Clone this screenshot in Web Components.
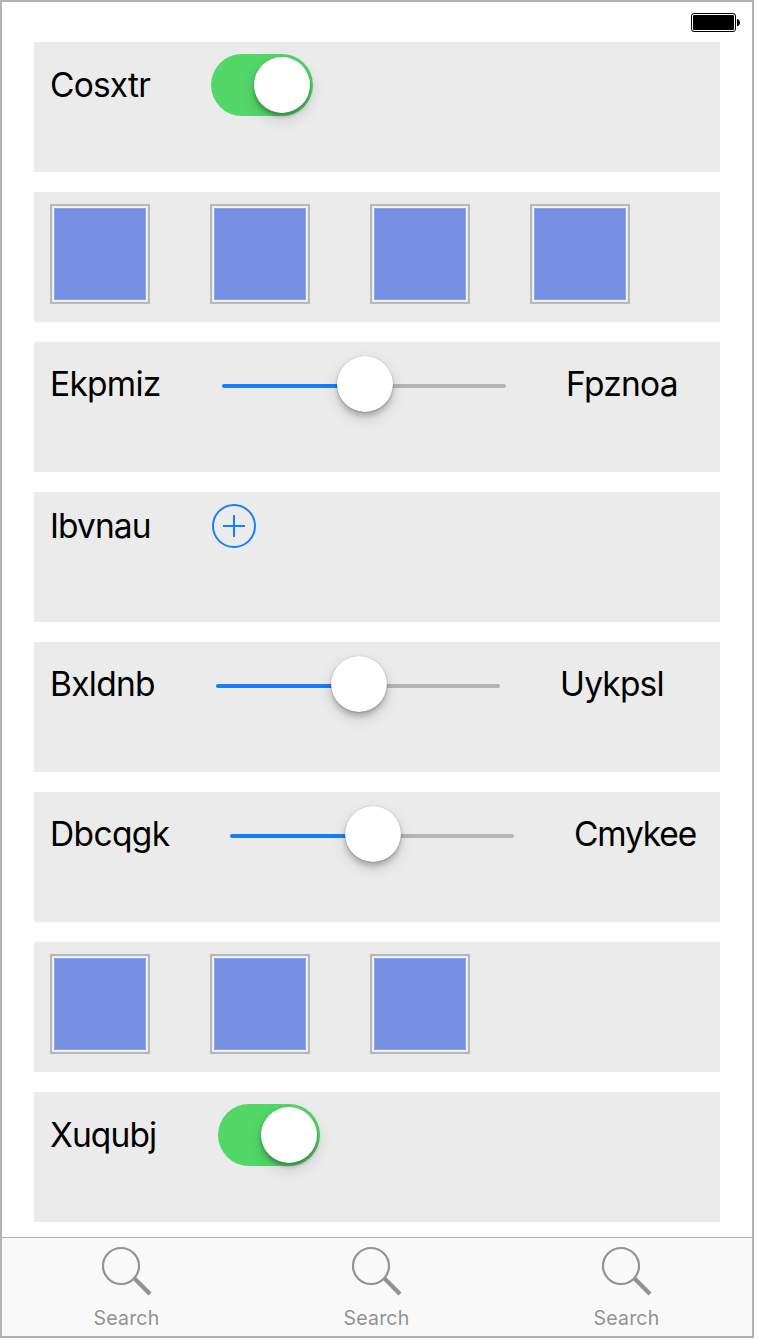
<!DOCTYPE html>
<html lang="en">
<head>
<meta charset="utf-8">
<title>Controls</title>
<style>
html, body { margin: 0; background: #fff; }
body { font-family: Inter, "Liberation Sans", sans-serif; color: #000; }
</style>
</head>
<body>
<phone-screen>
  <battery-icon slot="status"></battery-icon>
  <control-row><text-label style="--w:101px;--track:-.8px">Cosxtr</text-label><toggle-switch></toggle-switch></control-row>
  <control-row><image-box></image-box><image-box></image-box><image-box></image-box><image-box></image-box></control-row>
  <control-row><text-label style="--w:112px;--track:-.75px">Ekpmiz</text-label><range-slider></range-slider><text-label style="--track:-.75px">Fpznoa</text-label></control-row>
  <control-row><text-label style="--w:102px;--track:-.9px">Ibvnau</text-label><add-button></add-button></control-row>
  <control-row><text-label style="--w:106px;--track:-.7px">Bxldnb</text-label><range-slider></range-slider><text-label style="--track:-.8px">Uykpsl</text-label></control-row>
  <control-row><text-label style="--w:120px;--track:-.65px">Dbcqgk</text-label><range-slider></range-slider><text-label style="--track:-1.15px">Cmykee</text-label></control-row>
  <control-row><image-box></image-box><image-box></image-box><image-box></image-box></control-row>
  <control-row><text-label style="--w:108px;--track:-.9px">Xuqubj</text-label><toggle-switch></toggle-switch></control-row>
  <tab-item slot="tabs">Search</tab-item>
  <tab-item slot="tabs">Search</tab-item>
  <tab-item slot="tabs">Search</tab-item>
</phone-screen>
<script>
const define = (name, html) => {
  const template = document.createElement('template');
  template.innerHTML = html;
  customElements.define(name, class extends HTMLElement {
    constructor() {
      super();
      this.attachShadow({ mode: 'open' }).append(template.content.cloneNode(true));
    }
  });
};

define('phone-screen', `<style>
:host { display: flex; flex-direction: column; box-sizing: border-box; width: 754px; height: 1338px; border: 2px solid #b3b3b3; background: #fff; }
header { display: flex; justify-content: flex-end; box-sizing: border-box; height: 40px; padding: 11px 12px 0 0; }
main { flex: 1; display: flex; flex-direction: column; gap: 20px; padding: 0 32px; }
nav { display: grid; grid-template-columns: repeat(3, 250px); box-sizing: border-box; height: 99px; border-top: 1px solid #b2b2b2; background: #f9f9f9; }
</style>
<header><slot name="status"></slot></header>
<main><slot></slot></main>
<nav><slot name="tabs"></slot></nav>`);

define('battery-icon', `<style>:host, svg { display: block; width: 49px; height: 19px; }</style>
<svg viewBox="0 0 49 19"><rect x=".5" y=".5" width="44" height="18" rx="2.5" fill="#fff" stroke="#000"/><rect x="2" y="2" width="41" height="15" rx="1" fill="#000"/><path d="M46 6h.8Q49 7 49 9.500T46.800 13H46z"/></svg>`);

define('control-row', `<style>
:host { display: flex; align-items: flex-start; box-sizing: border-box; height: 130px; padding: 12px 16px; background: #ebebeb; }
div { display: flex; align-items: center; gap: 60px; }
</style><div><slot></slot></div>`);

define('text-label', `<style>
:host { display: block; width: var(--w, auto); font-size: 33.500px; line-height: 42px; letter-spacing: var(--track, -.8px); white-space: nowrap; }
</style><slot></slot>`);

define('toggle-switch', `<style>
:host { display: flex; justify-content: flex-end; box-sizing: border-box; width: 102px; height: 62px; padding: 3px; border-radius: 31px; background: #53d769; }
span { width: 56px; height: 56px; border-radius: 50%; background: #fff; box-shadow: 0 6px 16px rgba(0,0,0,.15), 0 3px 4px rgba(0,0,0,.3); }
</style><span></span>`);

define('image-box', `<style>
:host { display: block; box-sizing: border-box; width: 100px; height: 100px; border: 2px solid #b8b8b8; padding: 1px; background: #e9ebef; }
div { box-sizing: border-box; width: 94px; height: 94px; border: 1px solid #f1f4fc; background: #758fe3; box-shadow: inset 0 0 0 1px #8ea3e8; }
</style><div></div>`);

define('range-slider', `<style>
:host { display: grid; grid-template-columns: 114px 56px 114px; align-items: center; width: 284px; height: 60px; }
i { height: 4px; margin-top: 4px; background: #b4b4b4; border-radius: 0 2px 2px 0; }
i.on { margin-right: -2px; background: #157efb; border-radius: 2px 0 0 2px; }
b { width: 56px; height: 56px; margin-left: 1px; border-radius: 50%; background: #fff; box-shadow: 0 0 1px rgba(0,0,0,.3), 0 6px 16px rgba(0,0,0,.13), 0 5px 5px rgba(0,0,0,.17), 0 1px 2px rgba(0,0,0,.15); z-index: 1; }
</style><i class="on"></i><b></b><i></i>`);

define('add-button', `<style>:host, svg { display: block; width: 44px; height: 44px; }</style>
<svg viewBox="0 0 44 44" fill="none" stroke="#157efb" stroke-width="2"><circle cx="22" cy="22" r="21"/><path d="M11 22h22M22 11v22"/></svg>`);

define('tab-item', `<style>
:host { display: flex; flex-direction: column; align-items: center; padding-top: 8px; font-size: 19.500px; line-height: 24px; letter-spacing: .2px; color: #929292; }
svg { display: block; width: 50px; height: 50px; margin-bottom: 10px; }
span { margin-right: 1px; }
</style>
<svg viewBox="0 0 50 50" fill="none" stroke="#929292"><circle cx="19" cy="20" r="18" stroke-width="2.2"/><path d="M32.500 32.500L48 48" stroke-width="4.2"/></svg><span><slot></slot></span>`);
</script>
</body>
</html>
